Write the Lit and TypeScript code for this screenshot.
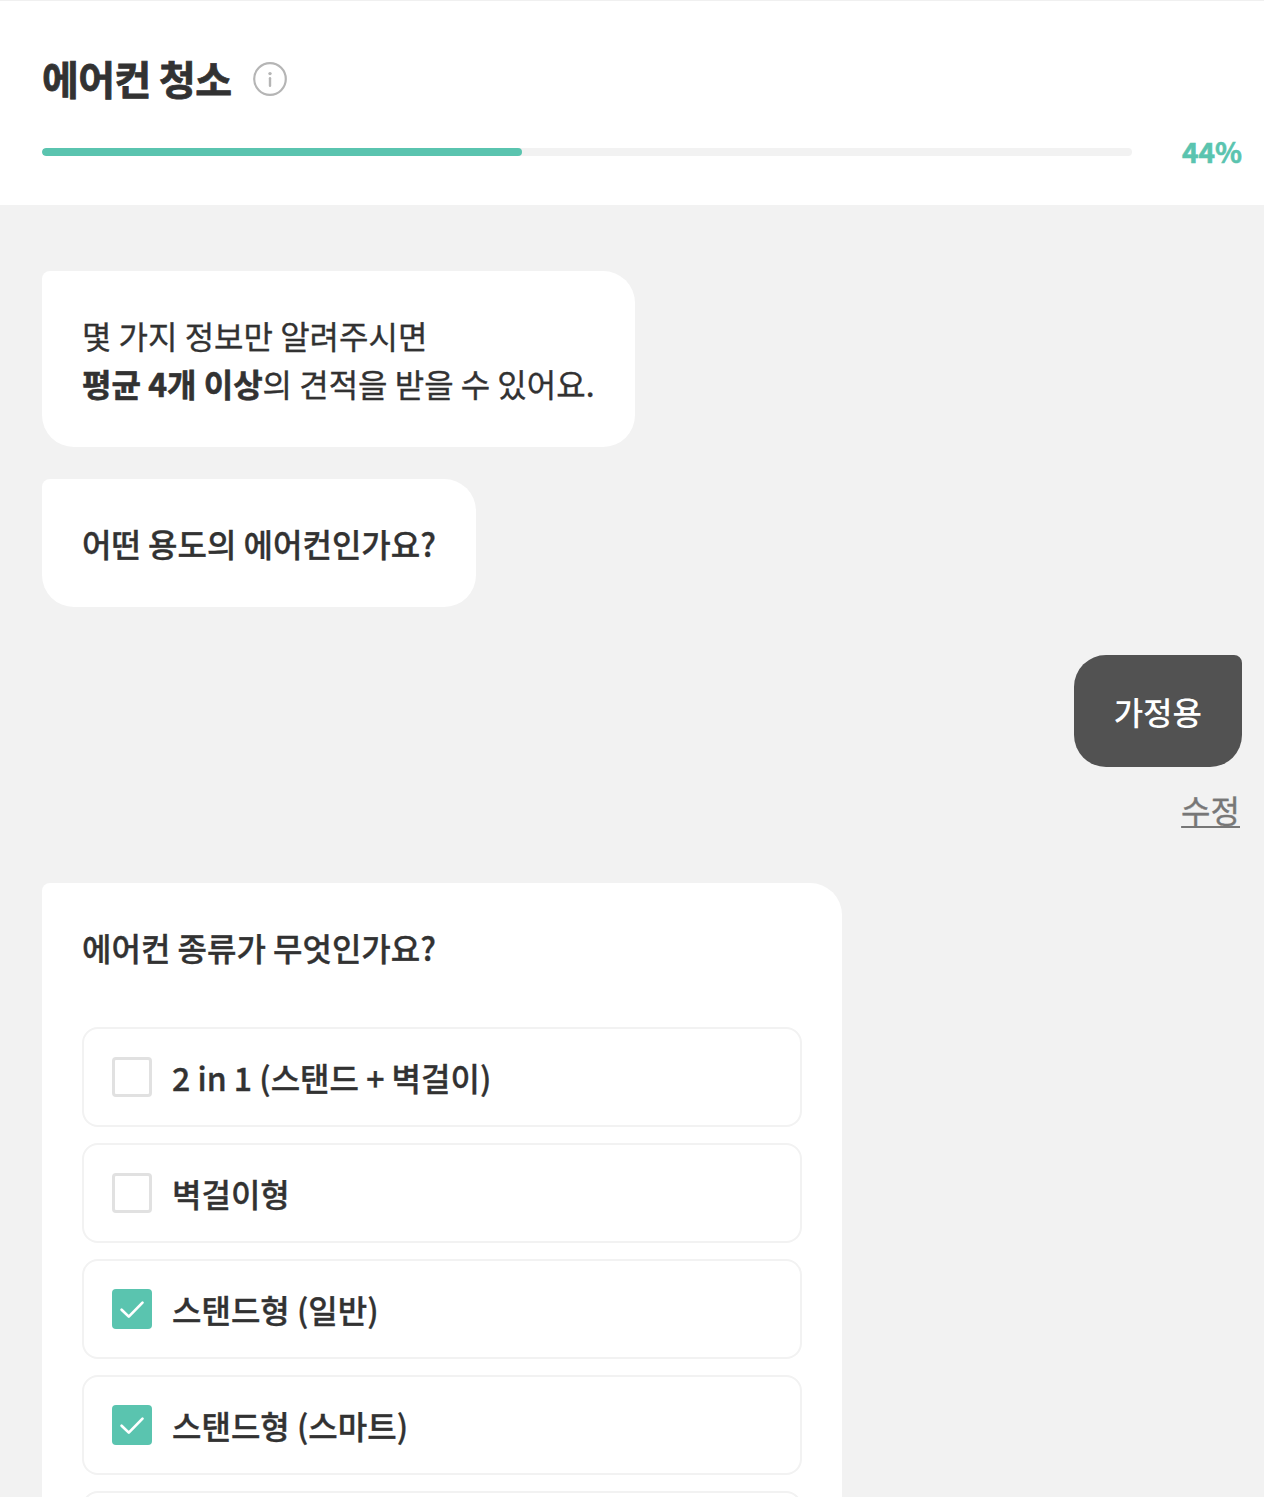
import { LitElement, html, css } from "lit";
import { customElement, property, state } from "lit/decorators.js";

@customElement("option-row")
class OptionRow extends LitElement {
  @property() label = "";
  @property({ type: Boolean }) checked = false;

  static styles = css`
    :host { display: block; }
    .row {
      box-sizing: border-box;
      display: flex;
      align-items: center;
      gap: 20px;
      height: 100px;
      padding: 0 28px;
      border: 2px solid #f2f2f2;
      border-radius: 16px;
      background: #fff;
      cursor: pointer;
    }
    .box {
      box-sizing: border-box;
      display: flex;
      flex: none;
      width: 40px;
      height: 40px;
      border: 3px solid #e1e1e1;
      border-radius: 4px;
    }
    .box.on { border: 0; background: #5ac4af; }
    .label {
      font-size: 32px;
      line-height: 48px;
      font-weight: 500;
      white-space: pre;
    }
  `;

  render() {
    return html`
      <div class="row">
        ${this.checked
          ? html`<span class="box on">
              <svg width="40" height="40" viewBox="0 0 40 40" fill="none" stroke="#fff" stroke-width="2.7" stroke-linecap="round" stroke-linejoin="round">
                <path d="M9.6 20.7L16.8 27.6L30.5 13.6" />
              </svg>
            </span>`
          : html`<span class="box"></span>`}
        <span class="label">${this.label}</span>
      </div>
    `;
  }
}

@customElement("app-root")
class AppRoot extends LitElement {
  @state() private progress = 44;
  @state() private options = [
    { label: "2 in 1 (스탠드 + 벽걸이)", checked: false },
    { label: "벽걸이형", checked: false },
    { label: "스탠드형 (일반)", checked: true },
    { label: "스탠드형 (스마트)", checked: true },
    { label: "", checked: false },
  ];

  static styles = css`
    :host {
      display: block;
      box-sizing: border-box;
      height: 1497px;
      overflow: hidden;
      background: #f2f2f2;
      color: #323232;
      font-family: "Noto Sans CJK KR", sans-serif;
      font-size: 32px;
      line-height: 48px;
      -webkit-text-stroke: 0.35px currentColor;
    }
    .header {
      box-sizing: border-box;
      height: 205px;
      padding: 47px 22px 0 42px;
      border-top: 1px solid #f0f0f0;
      background: #fff;
    }
    .heading { display: flex; align-items: center; gap: 21.5px; height: 60px; }
    .title {
      margin: 0;
      font-size: 40px;
      line-height: 60px;
      font-weight: 700;
      letter-spacing: -0.6px;
      white-space: pre;
      -webkit-text-stroke: 0.8px currentColor;
    }
    .info { display: block; margin-top: 2px; }
    .progress { display: flex; align-items: center; height: 42px; margin-top: 23px; }
    .track { width: 1090px; height: 8px; border-radius: 4px; background: #f2f2f2; overflow: hidden; }
    .fill { height: 100%; border-radius: 4px; background: #5ac4af; }
    .percent {
      flex: 1;
      margin-bottom: 2px;
      text-align: right;
      font-size: 28px;
      line-height: 42px;
      font-weight: 700;
      color: #5ac4af;
      -webkit-text-stroke: 0.6px currentColor;
    }
    .chat { display: flex; flex-direction: column; align-items: flex-start; padding: 66px 22px 0 42px; }
    .bubble {
      box-sizing: border-box;
      padding: 40px;
      border-radius: 8px 32px 32px 32px;
      background: #fff;
      white-space: nowrap;
    }
    .bubble b { -webkit-text-stroke: 0.6px currentColor; }
    .question { margin-top: 32px; font-weight: 500; }
    .answer {
      align-self: flex-end;
      margin-top: 48px;
      padding: 32px 40px;
      border-radius: 32px 8px 32px 32px;
      background: #525252;
      color: #fff;
      font-weight: 500;
      -webkit-text-stroke: 0;
    }
    .edit {
      align-self: flex-end;
      margin: 18px 2px 0 0;
      color: #777;
      text-decoration: underline;
      text-decoration-thickness: 2px;
      text-underline-offset: 3px;
      text-decoration-skip-ink: none;
      cursor: pointer;
    }
    .card { width: 800px; margin-top: 50px; }
    .ask { font-weight: 500; }
    .options { display: flex; flex-direction: column; gap: 16px; margin-top: 56px; }
  `;

  render() {
    return html`
      <header class="header">
        <div class="heading">
          <h1 class="title">에어컨 청소</h1>
          <svg class="info" width="34" height="34" viewBox="0 0 34 34">
            <circle cx="17" cy="17" r="15.8" fill="none" stroke="#b5b5b5" stroke-width="2.2" />
            <circle cx="17" cy="11.6" r="1.7" fill="#b5b5b5" />
            <path d="M17 16.2V23.8" stroke="#b5b5b5" stroke-width="2.4" stroke-linecap="round" />
          </svg>
        </div>
        <div class="progress">
          <div class="track"><div class="fill" style="width:${this.progress}%"></div></div>
          <span class="percent">${this.progress}%</span>
        </div>
      </header>
      <main class="chat">
        <div class="bubble">몇 가지 정보만 알려주시면<br /><b>평균 4개 이상</b>의 견적을 받을 수 있어요.</div>
        <div class="bubble question">어떤 용도의 에어컨인가요?</div>
        <div class="bubble answer">가정용</div>
        <a class="edit">수정</a>
        <section class="bubble card">
          <div class="ask">에어컨 종류가 무엇인가요?</div>
          <div class="options">
            ${this.options.map((o) => html`<option-row .label=${o.label} .checked=${o.checked}></option-row>`)}
          </div>
        </section>
      </main>
    `;
  }
}
